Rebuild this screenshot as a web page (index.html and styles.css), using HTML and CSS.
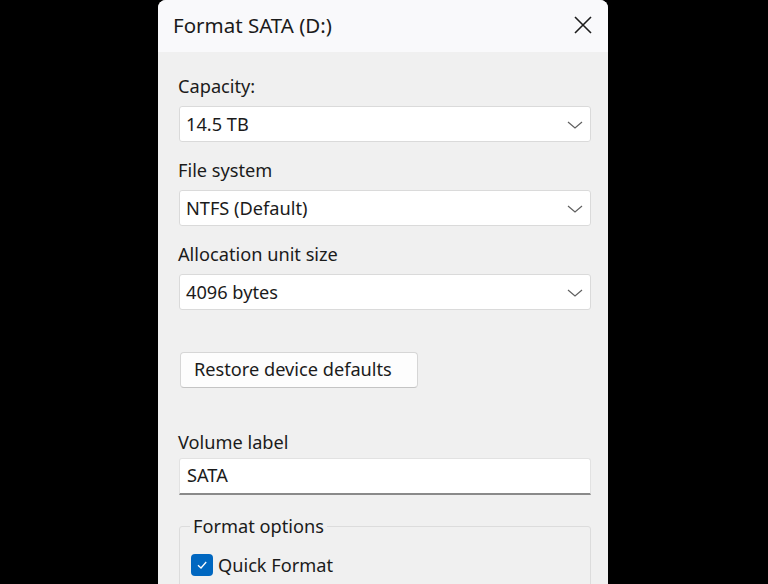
FILE: index.html
```html
<!DOCTYPE html>
<html lang="en">
<head>
    <meta charset="UTF-8">
    <title>Format SATA (D:)</title>
    <link rel="stylesheet" href="styles.css">
</head>
<body>
    <div class="dialog">
        <div class="titlebar">
            <span class="title">Format SATA (D:)</span>
            <svg class="close" width="20" height="20" viewBox="0 0 20 20">
                <path d="M2 2 L18 18 M18 2 L2 18" stroke="#1c1c1c" stroke-width="1.6" fill="none"/>
            </svg>
        </div>

        <div class="content">
            <div class="field-label first">Capacity:</div>
            <div class="select">
                <span>14.5 TB</span>
                <svg class="chevron" width="16" height="10" viewBox="0 0 16 10"><path d="M1 2 L8 8 L15 2" stroke="#606060" stroke-width="1.2" fill="none"/></svg>
            </div>

            <div class="field-label">File system</div>
            <div class="select">
                <span>NTFS (Default)</span>
                <svg class="chevron" width="16" height="10" viewBox="0 0 16 10"><path d="M1 2 L8 8 L15 2" stroke="#606060" stroke-width="1.2" fill="none"/></svg>
            </div>

            <div class="field-label">Allocation unit size</div>
            <div class="select">
                <span>4096 bytes</span>
                <svg class="chevron" width="16" height="10" viewBox="0 0 16 10"><path d="M1 2 L8 8 L15 2" stroke="#606060" stroke-width="1.2" fill="none"/></svg>
            </div>

            <button class="restore" type="button">Restore device defaults</button>

            <div class="field-label volume">Volume label</div>
            <div class="textbox">SATA</div>

            <fieldset class="options">
                <legend>Format options</legend>
                <label class="check">
                    <span class="box">
                        <svg width="14" height="14" viewBox="0 0 14 14"><path d="M3 7.2 L6 10 L11.2 4" stroke="#fff" stroke-width="1.3" fill="none"/></svg>
                    </span>
                    Quick Format
                </label>
            </fieldset>
        </div>
    </div>
</body>
</html>
```

FILE: styles.css
```css
body {
    margin: 0;
    background: #000;
    font-family: "Noto Sans", "Open Sans", sans-serif;
    color: #1b1b1b;
    overflow: hidden;
}
.dialog {
    margin-left: 158px;
    width: 450px;
    height: 100vh;
    background: #f0f0f0;
    border-radius: 8px 8px 0 0;
    overflow: hidden;
}
.titlebar {
    height: 52px;
    background: #f9f9fb;
    display: flex;
    align-items: center;
    justify-content: space-between;
    padding: 0 15px 0 15px;
}
.title {
    font-size: 20.5px;
    margin-top: -2px;
}
.close {
    margin-top: -2px;
}
.content {
    padding: 0 17px 0 20px;
    display: flex;
    flex-direction: column;
}
.field-label {
    font-size: 18.2px;
    line-height: 24px;
    height: 24px;
    margin: 16px 0 8px;
}
.field-label.first {
    margin-top: 22px;
}
.select {
    height: 34px;
    margin-left: 1px;
    background: #fff;
    border: 1px solid #dadada;
    border-radius: 3px;
    display: flex;
    align-items: center;
    justify-content: space-between;
    padding: 0 7px 0 6px;
    font-size: 18.2px;
}
.chevron {
    margin-top: 1px;
}
.restore {
    align-self: flex-start;
    margin: 42px 0 0 2px;
    width: 238px;
    height: 36px;
    background: #fdfdfd;
    border: 1px solid #d6d6d6;
    border-bottom-color: #c4c4c4;
    border-radius: 4px;
    font-family: inherit;
    font-size: 18.2px;
    color: #1b1b1b;
    text-align: left;
    padding: 0 0 2px 13px;
}
.field-label.volume {
    margin: 42px 0 4px;
}
.textbox {
    height: 34px;
    margin-left: 1px;
    background: #fff;
    border: 1px solid #e2e2e2;
    border-bottom: 2px solid #8a8a8a;
    border-radius: 3px 3px 0 0;
    padding: 0 7px;
    line-height: 33px;
    font-size: 18.2px;
}
.options {
    margin: 19px 0 0 1px;
    padding: 0 10px 20px;
    border: 1px solid #dcdcdc;
    border-radius: 3px;
}
.options legend {
    font-size: 18.2px;
    line-height: 24px;
    padding: 0 3px;
}
.check {
    display: flex;
    align-items: center;
    gap: 5px;
    margin-top: 15px;
    font-size: 18.2px;
}
.box {
    width: 22px;
    height: 22px;
    margin-left: 1px;
    border-radius: 4px;
    background: #0067c0;
    display: flex;
    align-items: center;
    justify-content: center;
}
```
